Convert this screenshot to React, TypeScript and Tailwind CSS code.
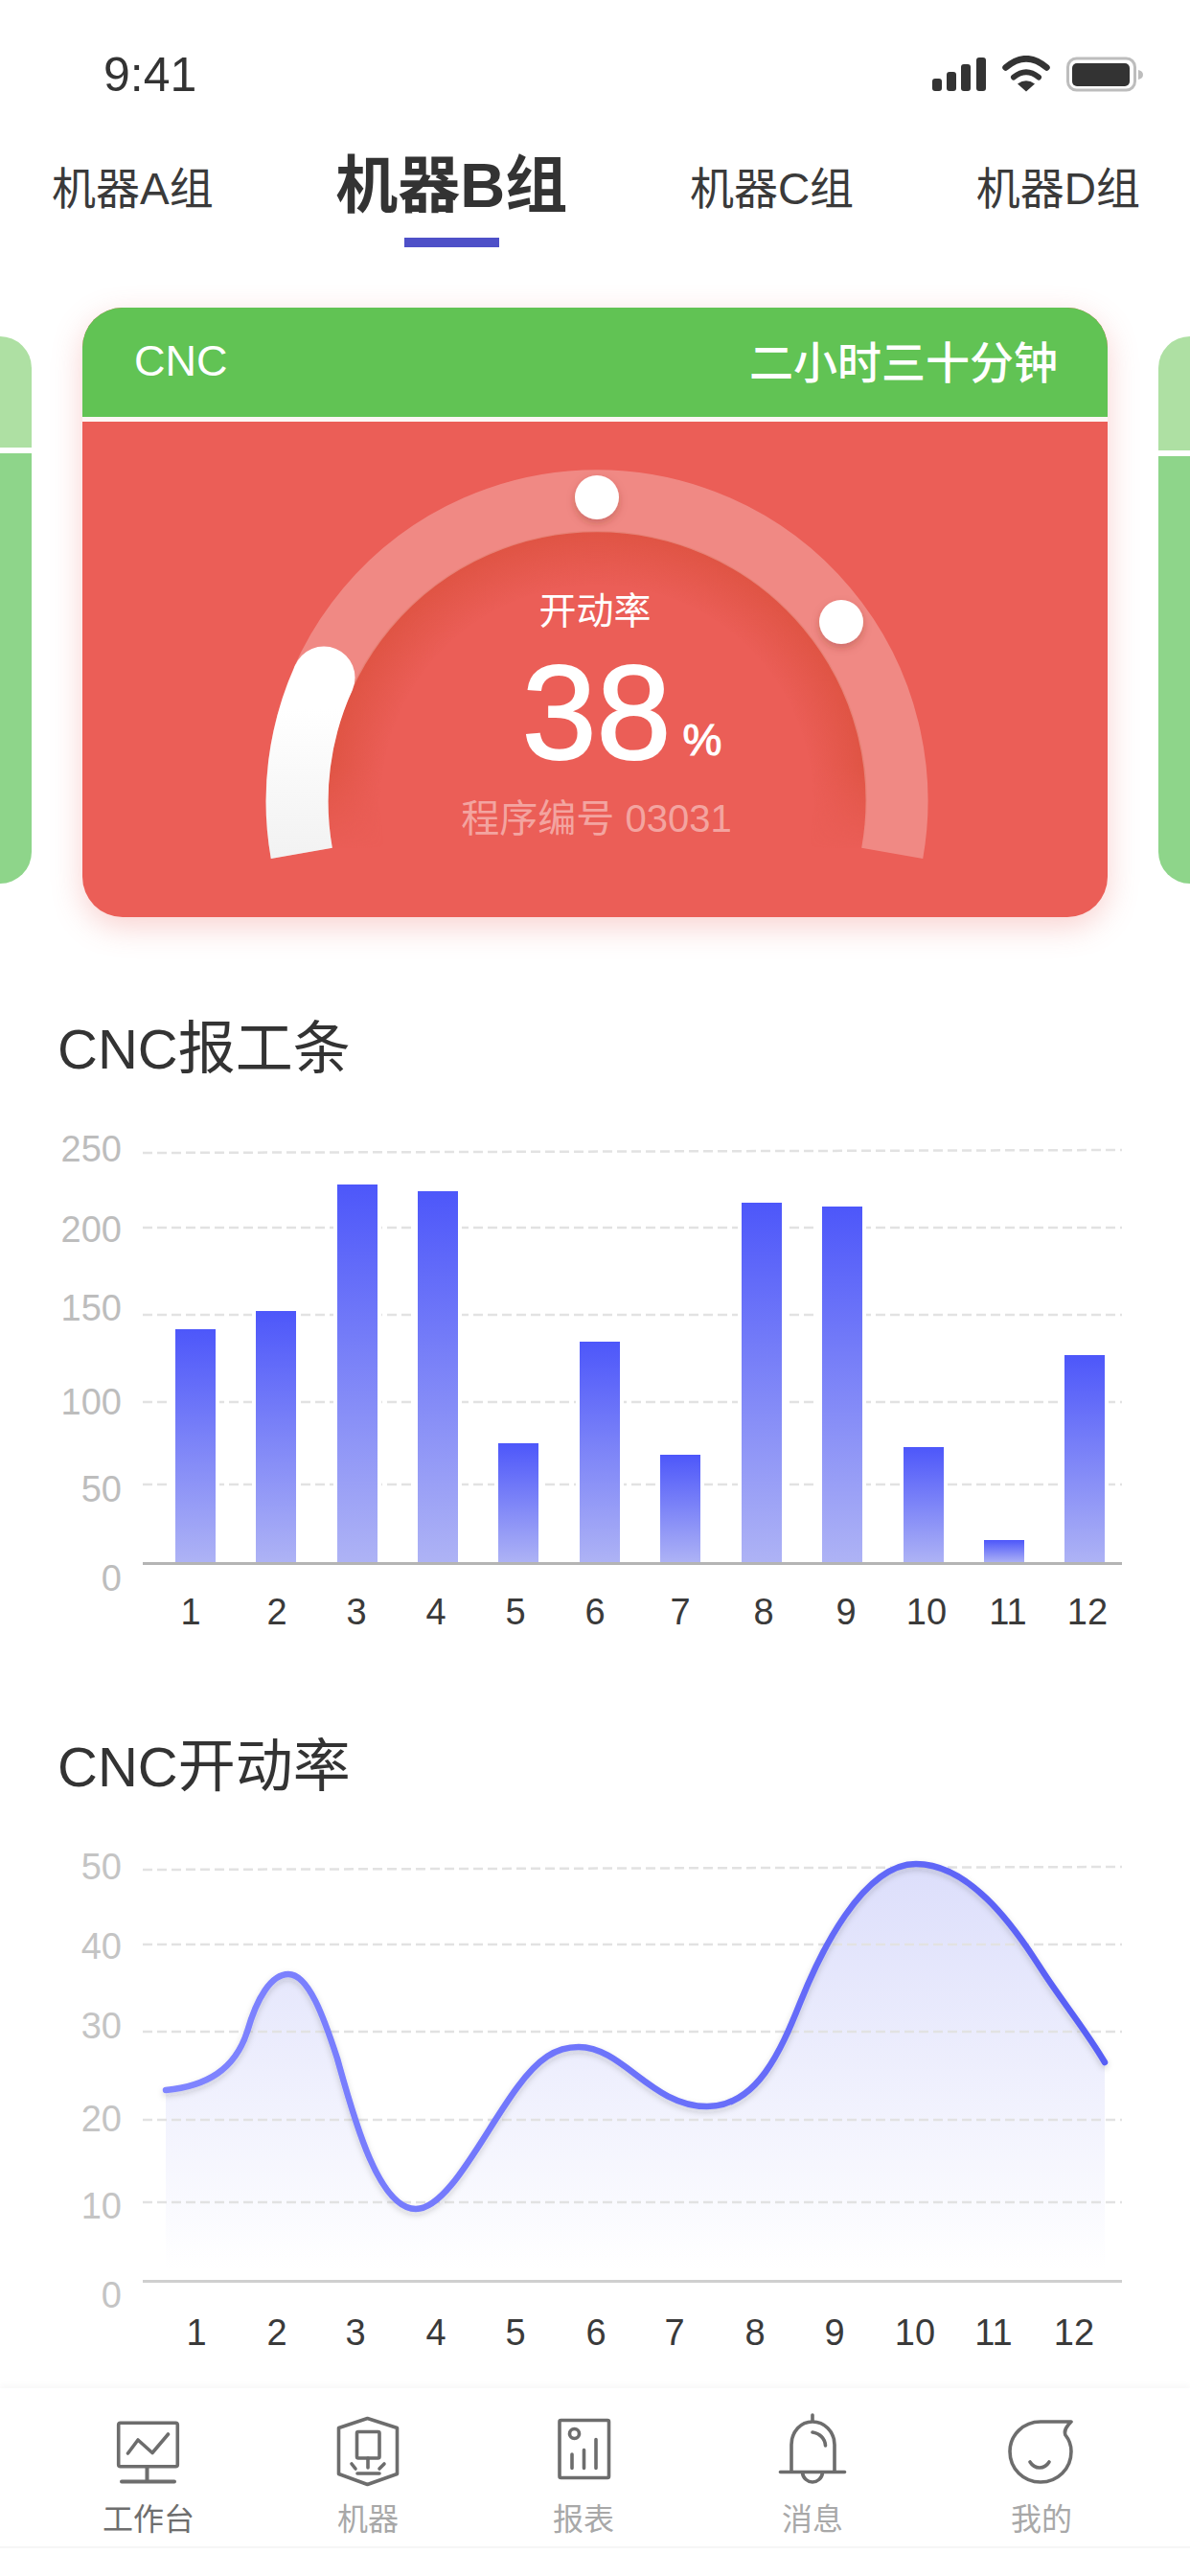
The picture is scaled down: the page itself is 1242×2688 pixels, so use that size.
import React from "react";

const bars = [
  [183, 1387], [267, 1368], [352, 1236], [436, 1243], [520, 1506], [605, 1400],
  [689, 1518], [774, 1255], [858, 1259], [943, 1510], [1027, 1607], [1111, 1414],
];
const barGrid = [[1203, 1200], [1281, 1281], [1372, 1372], [1463, 1463], [1549, 1549]];
const barY = [["250", 1198], ["200", 1282], ["150", 1364], ["100", 1462], ["50", 1553], ["0", 1646]] as const;
const barX = [199, 289, 372, 455, 538, 621, 710, 797, 883, 967, 1052, 1135];

const lineGrid = [[1951, 1948], [2029, 2029], [2120, 2120], [2212, 2212], [2298, 2298]];
const lineY = [["50", 1947], ["40", 2030], ["30", 2113], ["20", 2210], ["10", 2301], ["0", 2394]] as const;
const lineX = [205, 289, 371, 455, 538, 622, 704, 788, 871, 955, 1037, 1121];
const linePath =
  "M173 2181 C215 2177 245 2160 258 2120 C268 2085 283 2060 301 2060 C322 2060 338 2105 352 2148 C368 2205 394 2305 434 2305 C468 2305 505 2225 540 2178 C562 2148 580 2136 604 2136 C650 2136 680 2198 738 2198 C790 2198 815 2140 835 2090 C855 2040 900 1945 956 1945 C1010 1945 1055 2005 1085 2052 C1108 2088 1133 2118 1153 2152";

function Tab({ label }: { label: string }) {
  return <div className="h-[78px] text-[46px] leading-[82px] text-[#3a3a3a]">{label}</div>;
}

function SidePeek({ side }: { side: "left" | "right" }) {
  return (
    <div className={`mt-[30px] flex h-[571px] w-[33px] flex-col self-start overflow-hidden ${side === "left" ? "rounded-r-[40px]" : "rounded-l-[40px]"}`}>
      <div className={`${side === "left" ? "h-[116px]" : "h-[119px]"} bg-[#aee0a3]`} />
      <div className="h-[6px] bg-white" />
      <div className="flex-1 bg-[#8ed58a]" />
    </div>
  );
}

function Gauge() {
  return (
    <svg className="absolute inset-0" width="1070" height="517" viewBox="86 440 1070 517" fill="none">
      <defs>
        <radialGradient id="glow" gradientUnits="userSpaceOnUse" cx="623" cy="836" r="282">
          <stop offset="0.8" stopColor="#df5444" stopOpacity="0" />
          <stop offset="1" stopColor="#df5444" stopOpacity="1" />
        </radialGradient>
        <linearGradient id="fade" gradientUnits="userSpaceOnUse" x1="0" y1="800" x2="0" y2="885">
          <stop offset="0" stopColor="#fff" />
          <stop offset="1" stopColor="#000" />
        </linearGradient>
        <mask id="glowMask" maskUnits="userSpaceOnUse" x="86" y="440" width="1070" height="517">
          <rect x="86" y="440" width="1070" height="517" fill="url(#fade)" />
        </mask>
        <linearGradient id="whiteArc" gradientUnits="userSpaceOnUse" x1="0" y1="740" x2="0" y2="894">
          <stop offset="0" stopColor="#ffffff" />
          <stop offset="1" stopColor="#f2f2f2" />
        </linearGradient>
        <filter id="dot" x="-50%" y="-50%" width="200%" height="200%">
          <feDropShadow dx="0" dy="4" stdDeviation="4" floodColor="#7a2a20" floodOpacity="0.3" />
        </filter>
      </defs>
      <circle cx="623" cy="836" r="282" fill="url(#glow)" mask="url(#glowMask)" />
      <path d="M314.8 890.4 A313 313 0 1 1 931.2 890.4" stroke="#ffffff" strokeOpacity="0.27" strokeWidth="65" />
      <path d="M314.8 890.4 A313 313 0 0 1 338 707" stroke="url(#whiteArc)" strokeWidth="65" />
      <circle cx="338" cy="707" r="32.5" fill="#ffffff" />
      <circle cx="623" cy="519" r="23" fill="#ffffff" filter="url(#dot)" />
      <circle cx="878" cy="649" r="23" fill="#ffffff" filter="url(#dot)" />
    </svg>
  );
}

function BarChart() {
  return (
    <svg className="block" width="1242" height="575" viewBox="0 1135 1242 575" fill="none">
      <defs>
        <linearGradient id="bar" x1="0" y1="0" x2="0" y2="1">
          <stop offset="0" stopColor="#4d57fa" />
          <stop offset="1" stopColor="#aeb3f5" />
        </linearGradient>
      </defs>
      {barGrid.map(([a, b]) => (
        <line key={a} x1="149" y1={a} x2="1171" y2={b} stroke="#e2e2e2" strokeWidth="2.5" strokeDasharray="10 5" />
      ))}
      {bars.map(([x, y]) => (
        <g key={x}>
          <rect x={x - 4} y={y} width="50" height={1631 - y} fill="#ffffff" />
          <rect x={x} y={y} width="42" height={1631 - y} fill="url(#bar)" />
        </g>
      ))}
      <rect x="149" y="1630" width="1022" height="3" fill="#b4b4b4" />
      {barY.map(([t, y]) => (
        <text key={t} x="127" y={y + 13.5} textAnchor="end" fontSize="38" fill="#bdbdbd">{t}</text>
      ))}
      {barX.map((x, i) => (
        <text key={x} x={x} y="1695" textAnchor="middle" fontSize="38" fill="#3a3a3a">{i + 1}</text>
      ))}
    </svg>
  );
}

function LineChart() {
  return (
    <svg className="block" width="1242" height="590" viewBox="0 1882 1242 590" fill="none">
      <defs>
        <linearGradient id="area" gradientUnits="userSpaceOnUse" x1="0" y1="1945" x2="0" y2="2368">
          <stop offset="0" stopColor="#dcdefb" />
          <stop offset="1" stopColor="#ffffff" />
        </linearGradient>
        <linearGradient id="stroke" gradientUnits="userSpaceOnUse" x1="173" y1="0" x2="1153" y2="0">
          <stop offset="0" stopColor="#8085ff" />
          <stop offset="1" stopColor="#585ff5" />
        </linearGradient>
        <filter id="lineShadow" x="-5%" y="-10%" width="110%" height="120%">
          <feDropShadow dx="0" dy="3" stdDeviation="3" floodColor="#333" floodOpacity="0.18" />
        </filter>
      </defs>
      <path d={`${linePath} V2368 H173 Z`} fill="url(#area)" />
      {lineGrid.map(([a, b]) => (
        <line key={a} x1="149" y1={a} x2="1171" y2={b} stroke="#e2e2e2" strokeWidth="2.5" strokeDasharray="10 5" />
      ))}
      <path d={linePath} stroke="url(#stroke)" strokeWidth="6.5" strokeLinecap="round" filter="url(#lineShadow)" />
      <rect x="149" y="2379" width="1022" height="3" fill="#cfcfcf" />
      {lineY.map(([t, y]) => (
        <text key={t} x="127" y={y + 13.5} textAnchor="end" fontSize="38" fill="#c4c4c4">{t}</text>
      ))}
      {lineX.map((x, i) => (
        <text key={x} x={x} y="2447" textAnchor="middle" fontSize="38" fill="#3a3a3a">{i + 1}</text>
      ))}
    </svg>
  );
}

const iconProps = { width: 80, height: 78, fill: "none", stroke: "#6d6d6d", strokeWidth: 3.6, strokeLinecap: "round" as const, strokeLinejoin: "round" as const };

function MonitorIcon() {
  return (
    <svg {...iconProps} viewBox="116 2518 80 78">
      <rect x="124.7" y="2528.2" width="61.6" height="45.6" rx="2" />
      <path d="M134.5 2560 L145 2546 L160 2559.5 L176.5 2540" />
      <path d="M154.5 2575 V2589 M128 2589.5 H183" strokeWidth="4" />
    </svg>
  );
}
function HexIcon() {
  return (
    <svg {...iconProps} viewBox="344 2518 80 78">
      <path d="M383.5 2523.5 L414.5 2533.5 V2581.5 L383.5 2592.5 L353.5 2581.5 V2533.5 Z" />
      <rect x="372.5" y="2537.5" width="23.5" height="27.5" rx="1.5" />
      <path d="M384 2565 V2575 M367 2571 L371 2576 M401 2571 L396 2576 M373 2581 H396" />
    </svg>
  );
}
function ReportIcon() {
  return (
    <svg {...iconProps} viewBox="569 2518 80 78">
      <rect x="584" y="2525.5" width="51.5" height="60" rx="1.5" />
      <circle cx="599.5" cy="2539.5" r="5" />
      <path d="M597 2561 V2575.5 M609.5 2556.5 V2575.5 M622 2545.5 V2575.5" />
    </svg>
  );
}
function BellIcon() {
  return (
    <svg {...iconProps} viewBox="808 2518 80 78">
      <path d="M848 2520 V2527 M826 2579 V2551 C826 2537 836 2527 848 2527 C860 2527 871 2537 871 2551 V2579" />
      <path d="M814.5 2579.5 H881.5" />
      <path d="M837.5 2580 C838 2586 843 2590 848 2590 C853 2590 858 2586 858.5 2580" />
      <path d="M848 2538 C855 2539 861 2544 861.5 2552" />
    </svg>
  );
}
function MeIcon() {
  return (
    <svg {...iconProps} viewBox="1047 2518 80 78">
      <path d="M1118 2527 H1086 C1068 2527 1054 2541 1054 2558 C1054 2576 1068 2590 1086 2590 C1104 2590 1118 2576 1118 2558 C1118 2550 1116 2546 1112 2541 C1110 2536 1113 2532 1118 2527 Z" />
      <path d="M1075 2569 C1080 2577 1090 2577 1095 2569" />
    </svg>
  );
}

function NavItem({ icon, label, className }: { icon: React.ReactNode; label: string; className: string }) {
  return (
    <div className={`flex w-[100px] flex-col items-center ${className}`}>
      {icon}
      <div className="mt-[13px] h-[40px] whitespace-nowrap text-[32px] leading-[40px]">{label}</div>
    </div>
  );
}

export default function App() {
  return (
    <div className="flex h-[2688px] w-[1242px] flex-col overflow-hidden bg-white font-['Liberation_Sans','Noto_Sans_CJK_SC',sans-serif] text-[#3a3a3a]">
      <div className="flex h-[156px] items-center justify-between pl-[108px] pr-[49px]">
        <div className="text-[50px] text-[#333]">9:41</div>
        <svg width="220" height="40" viewBox="973 58 220 40" fill="none">
          <rect x="973" y="82" width="10" height="13" rx="3" fill="#333" />
          <rect x="988" y="75" width="10" height="20" rx="3" fill="#333" />
          <rect x="1003" y="67" width="10" height="28" rx="3" fill="#333" />
          <rect x="1019" y="60" width="10" height="35" rx="3" fill="#333" />
          <path d="M1049.5 70.5 Q1071 52 1092.5 70.5" stroke="#333" strokeWidth="6.5" strokeLinecap="round" />
          <path d="M1058 80.5 Q1071 70 1084 80.5" stroke="#333" strokeWidth="6" strokeLinecap="round" />
          <path d="M1071 95.5 L1062 87.5 Q1071 81 1080 87.5 Z" fill="#333" />
          <rect x="1114.5" y="61" width="70" height="33" rx="9" stroke="#bdbdbd" strokeWidth="3" />
          <rect x="1119" y="66" width="60" height="24" rx="5" fill="#333" />
          <path d="M1188 73 Q1193 74 1193 78 Q1193 82 1188 83 Z" fill="#bdbdbd" />
        </svg>
      </div>

      <div className="flex h-[102px] items-start justify-between pl-[54px] pr-[52px]">
        <Tab label="机器A组" />
        <div className="flex flex-col items-center">
          <div className="h-[72px] whitespace-nowrap text-[65px] font-bold leading-[76px] text-[#333]">机器B组</div>
          <div className="mt-[20px] h-[10px] w-[99px] bg-[#4e50c8]" />
        </div>
        <Tab label="机器C组" />
        <Tab label="机器D组" />
      </div>

      <div className="mt-[63px] flex h-[636px] items-start justify-between">
        <SidePeek side="left" />
        <div className="flex h-[636px] w-[1070px] flex-col overflow-hidden rounded-[42px] bg-[#eb5e57] shadow-[0_10px_32px_rgba(235,94,87,0.28)]">
          <div className="flex h-[114px] items-center justify-between bg-[#61c354] pl-[54px] pr-[52px] text-white">
            <div className="pb-[2px] text-[45px]">CNC</div>
            <div className="pt-[2px] text-[46px] font-medium">二小时三十分钟</div>
          </div>
          <div className="h-[5px] bg-[#fdf6f4]" />
          <div className="relative flex flex-1 flex-col items-center pt-[175px] text-white">
            <Gauge />
            <div className="relative text-[39px] leading-[46px]">开动率</div>
            <div className="relative mt-[18px] ml-[56px] flex h-[130px] items-baseline">
              <div className="text-[140px] leading-[130px] [-webkit-text-stroke:2px_white]">38</div>
              <div className="ml-[12px] -translate-y-[4px] text-[46px] [-webkit-text-stroke:1px_white]">%</div>
            </div>
            <div className="relative mt-[22px] ml-[3px] whitespace-pre text-[40px] leading-[46px] text-white/45">程序编号 03031</div>
          </div>
        </div>
        <SidePeek side="right" />
      </div>

      <div className="mt-[98px] h-[80px] pl-[60px] text-[60px] leading-[80px] text-[#333]"><span className="text-[58px]">CNC</span>报工条</div>
      <BarChart />
      <div className="mt-[94px] h-[78px] pl-[60px] text-[60px] leading-[80px] text-[#333]"><span className="text-[58px]">CNC</span>开动率</div>
      <LineChart />

      <div className="mt-[20px] flex h-[167px] border-b-2 border-[#f6f6f6] pl-[105px] pt-[26px] shadow-[0_-3px_6px_rgba(0,0,0,0.03)]">
        <NavItem icon={<MonitorIcon />} label="工作台" className="text-[#6e6e6e]" />
        <NavItem icon={<HexIcon />} label="机器" className="ml-[129px] text-[#a8a8a8]" />
        <NavItem icon={<ReportIcon />} label="报表" className="ml-[125px] text-[#a8a8a8]" />
        <NavItem icon={<BellIcon />} label="消息" className="ml-[139px] text-[#a8a8a8]" />
        <NavItem icon={<MeIcon />} label="我的" className="ml-[139px] text-[#a8a8a8]" />
      </div>
    </div>
  );
}
